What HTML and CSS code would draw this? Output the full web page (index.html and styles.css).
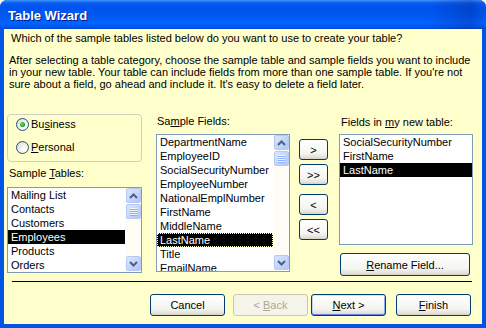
FILE: index.html
```html
<!DOCTYPE html>
<html lang="en">
<head>
    <meta charset="UTF-8">
    <title>Table Wizard</title>
    <link rel="stylesheet" href="styles.css">
</head>
<body>
    <div class="window">
        <div class="titlebar"><span class="title">Table Wizard</span></div>
        <div class="client">
            <p class="question">Which of the sample tables listed below do you want to use to create your table?</p>
            <p class="intro">After selecting a table category, choose the sample table and sample fields you want to include<br>in your new table. Your table can include fields from more than one sample table. If you're not<br>sure about a field, go ahead and include it. It's easy to delete a field later.</p>

            <div class="main">
                <!-- categorias y tablas -->
                <div class="col col-tables">
                    <div class="groupbox">
                        <label class="radio"><span class="radio-circle checked"></span>Bu<u>s</u>iness</label>
                        <label class="radio"><span class="radio-circle"></span><u>P</u>ersonal</label>
                    </div>
                    <div class="field-label tables-label">Sample <u>T</u>ables:</div>
                    <div class="listbox tables-list">
                        <ul class="items">
                            <li>Mailing List</li>
                            <li>Contacts</li>
                            <li>Customers</li>
                            <li class="selected">Employees</li>
                            <li>Products</li>
                            <li>Orders</li>
                        </ul>
                        <div class="scrollbar">
                            <div class="scroll-btn"><svg width="9" height="6" viewBox="0 0 9 6"><polyline points="1,5 4.5,1.5 8,5" fill="none" stroke="#4d6185" stroke-width="2"/></svg></div>
                            <div class="scroll-thumb"><span class="grip"></span></div>
                            <div class="scroll-track"></div>
                            <div class="scroll-btn"><svg width="9" height="6" viewBox="0 0 9 6"><polyline points="1,1 4.5,4.5 8,1" fill="none" stroke="#4d6185" stroke-width="2"/></svg></div>
                        </div>
                    </div>
                </div>

                <!-- campos de ejemplo -->
                <div class="col col-fields">
                    <div class="field-label">Sa<u>m</u>ple Fields:</div>
                    <div class="listbox fields-list">
                        <ul class="items">
                            <li>DepartmentName</li>
                            <li>EmployeeID</li>
                            <li>SocialSecurityNumber</li>
                            <li>EmployeeNumber</li>
                            <li>NationalEmplNumber</li>
                            <li>FirstName</li>
                            <li>MiddleName</li>
                            <li class="selected focused">LastName</li>
                            <li>Title</li>
                            <li>EmailName</li>
                        </ul>
                        <div class="scrollbar">
                            <div class="scroll-btn"><svg width="9" height="6" viewBox="0 0 9 6"><polyline points="1,5 4.5,1.5 8,5" fill="none" stroke="#4d6185" stroke-width="2"/></svg></div>
                            <div class="scroll-thumb"><span class="grip"></span></div>
                            <div class="scroll-track"></div>
                            <div class="scroll-btn"><svg width="9" height="6" viewBox="0 0 9 6"><polyline points="1,1 4.5,4.5 8,1" fill="none" stroke="#4d6185" stroke-width="2"/></svg></div>
                        </div>
                    </div>
                </div>

                <div class="col col-move">
                    <button class="btn move-btn">&gt;</button>
                    <button class="btn move-btn all">&gt;&gt;</button>
                    <button class="btn move-btn back-one">&lt;</button>
                    <button class="btn move-btn all">&lt;&lt;</button>
                </div>

                <!-- campos de la nueva tabla -->
                <div class="col col-new">
                    <div class="field-label new-label">Fields in <u>m</u>y new table:</div>
                    <div class="listbox new-list">
                        <ul class="items">
                            <li>SocialSecurityNumber</li>
                            <li>FirstName</li>
                            <li class="selected">LastName</li>
                        </ul>
                    </div>
                    <button class="btn rename-btn"><u>R</u>ename Field...</button>
                </div>
            </div>

            <div class="separator"></div>

            <div class="wizard-actions">
                <button class="btn">Cancel</button>
                <button class="btn disabled">&lt; <u>B</u>ack</button>
                <button class="btn default"><u>N</u>ext &gt;</button>
                <button class="btn"><u>F</u>inish</button>
            </div>
        </div>
    </div>
</body>
</html>
```

FILE: styles.css
```css
body {
    margin: 0; width: 486px; height: 328px; overflow: hidden;
    font-family: 'Liberation Sans', Arial, sans-serif; font-size: 11px; color: #000;
}
.window {
    width: 486px; height: 328px; display: flex; flex-direction: column;
    background: #0055e5; border-radius: 7px 7px 0 0;
}
.titlebar {
    height: 29px; flex: none; display: flex; align-items: center; padding-left: 8px;
    border-radius: 7px 7px 0 0;
    background:
        linear-gradient(to right, rgba(0, 20, 120, 0) 88%, rgba(0, 20, 120, 0.25) 97%, rgba(0, 20, 120, 0) 100%),
        linear-gradient(#3d95ff 0, #0a5df0 3px, #0053ee 7px, #0058f0 16px, #0064ff 23px, #0058ec 27px, #0046d0 29px);
}
.title {
    color: #fff; font-weight: bold; font-size: 13px; margin-top: 1px;
    text-shadow: 1px 1px 0 #0a1883;
}
.client {
    flex: 1; margin: 0 4px 4px 4px; background: #ffffcc;
    display: flex; flex-direction: column;
}
.question {
    margin: 3px 0 0 7px; line-height: 12px;
}
.intro {
    margin: 10px 0 0 5px; line-height: 12px;
}
.main {
    display: flex; margin-top: 24px; padding-left: 3px; height: 162px;
}
.col {
    display: flex; flex-direction: column; flex: none;
}
.col-tables { width: 135px; }
.col-fields { width: 134px; margin-left: 14px; }
.col-move { width: 29px; margin-left: 9px; padding-top: 25px; }
.col-new { width: 134px; margin-left: 11px; }

.groupbox {
    height: 48px; box-sizing: border-box; border: 1px solid #d0d0bf; border-radius: 4px;
    padding: 3px 0 0 8px; display: flex; flex-direction: column; gap: 10px;
}
.radio {
    display: flex; align-items: center; height: 13px; line-height: 13px;
}
.radio-circle {
    width: 11px; height: 11px; border: 1px solid #1c5180; border-radius: 50%;
    background: radial-gradient(circle at 70% 70%, #fff 0, #f4f3ee 40%, #d4d2c8 100%);
    margin-right: 2px; position: relative; flex: none;
}
.radio-circle.checked::after {
    content: ''; position: absolute; left: 3px; top: 3px; width: 5px; height: 5px; border-radius: 50%;
    background: radial-gradient(circle at 40% 40%, #6fe06f 0, #21a121 60%, #1a8a1a 100%);
}
.field-label {
    line-height: 12px; padding-left: 1px; margin-top: 1px;
}
.tables-label { margin-top: 5px; padding-left: 2px; }
.new-label { margin-top: 2px; padding-left: 2px; }

.listbox {
    background: #fff; border: 1px solid #7f9db9; box-sizing: border-box;
    display: flex; overflow: hidden;
}
.tables-list { margin-top: 8px; height: 86px; }
.fields-list { margin-top: 7px; height: 138px; }
.new-list { margin-top: 6px; height: 111px; }
.items {
    list-style: none; margin: 0; padding: 0; flex: 1; min-width: 0;
}
.items li {
    height: 14px; line-height: 14px; padding-left: 3px; white-space: nowrap;
}
.items li.selected { background: #000; color: #fff; }
.items li.focused { outline: 1px dotted #ffffcc; outline-offset: -1px; }

.scrollbar {
    width: 16px; flex: none; display: flex; flex-direction: column;
    background: #fdfdf6;
}
.scroll-btn, .scroll-thumb {
    height: 15px; margin: 0 0 1px 1px; box-sizing: border-box;
    border: 1px solid #b6c8f4; border-radius: 2px;
    background: linear-gradient(135deg, #dce6fd, #c1d3fb 60%, #b2c6f6);
    display: flex; align-items: center; justify-content: center;
}
.scroll-thumb { margin-top: 0; }
.scroll-track { flex: 1; }
.grip {
    width: 7px; height: 8px;
    background: repeating-linear-gradient(#eef4fe 0 1px, #8cb0f8 1px 2px);
}

.btn {
    font: inherit; color: #000; padding: 0; cursor: pointer;
    border: 1px solid #003c74; border-radius: 3px;
    background: linear-gradient(#ffffff, #f4f4f0 70%, #e3e2da 90%, #d6d0c5);
}
.move-btn { height: 21px; width: 29px; margin-bottom: 4px; }
.move-btn.back-one { margin-top: 5px; }
.rename-btn { margin: 8px 0 0 1px; width: 130px; height: 23px; }

.separator {
    height: 1px; background: #000; margin: 5px 10px 0 8px;
}
.wizard-actions {
    display: flex; justify-content: flex-end; margin-top: 12px; padding-right: 11px;
}
.wizard-actions .btn { width: 75px; height: 22px; margin-left: 3px; }
.wizard-actions .btn:first-child { margin-right: 5px; }
.wizard-actions .btn:last-child { margin-left: 10px; }
.btn.disabled {
    color: #aca899; border-color: #c9c7ba; background: #f5f4ea;
}
.btn.default {
    box-shadow: inset 0 1px 0 #cee7ff, inset 0 -1px 0 #6982ee, inset 1px 0 0 #b8d2fb, inset -1px 0 0 #89adf4;
}
```
